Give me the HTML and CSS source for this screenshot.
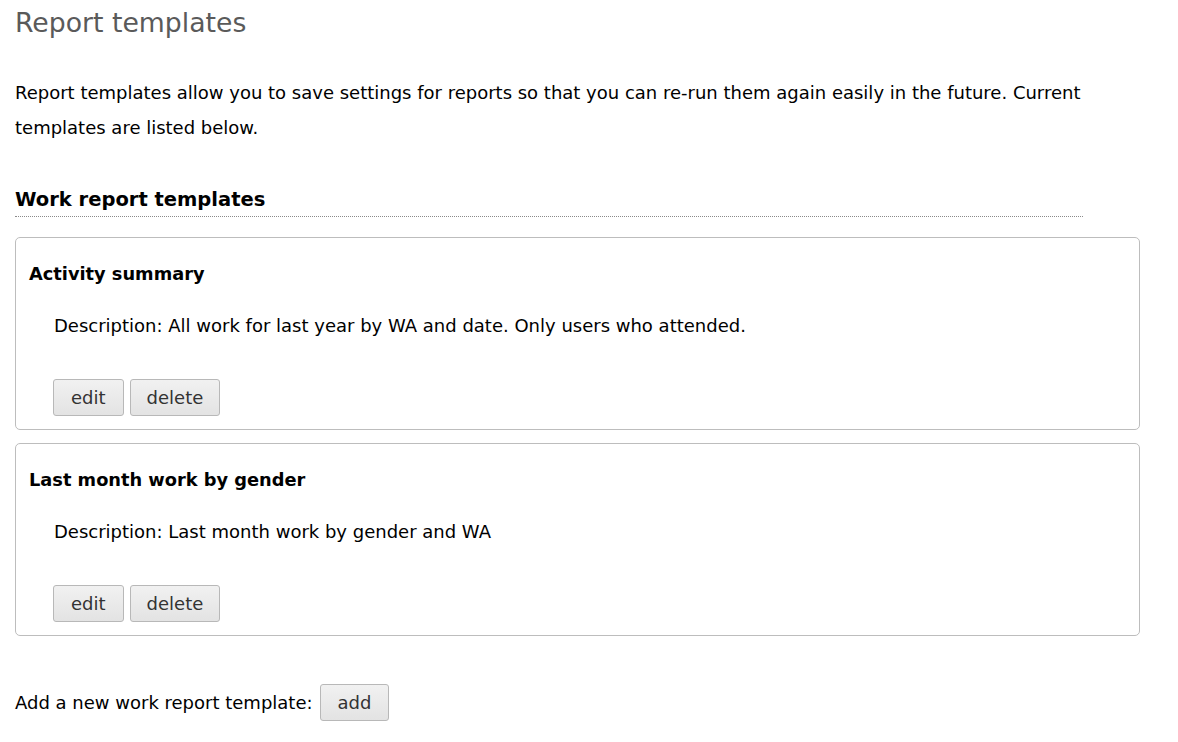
FILE: index.html
```html
<!DOCTYPE html>
<html>
<head>
<meta charset="utf-8">
<link rel="stylesheet" href="styles.css">
</head>
<body>
<div class="page">
  <h1 class="title">Report templates</h1>
  <p class="intro">Report templates allow you to save settings for reports so that you can re-run them again easily in the future. Current templates are listed below.</p>
  <h2 class="section">Work report templates</h2>
  <div class="card">
    <h3 class="card-title">Activity summary</h3>
    <p class="desc">Description: All work for last year by WA and date. Only users who attended.</p>
    <div class="actions"><button class="btn btn-edit">edit</button><button class="btn btn-delete">delete</button></div>
  </div>
  <div class="card">
    <h3 class="card-title">Last month work by gender</h3>
    <p class="desc">Description: Last month work by gender and WA</p>
    <div class="actions"><button class="btn btn-edit">edit</button><button class="btn btn-delete">delete</button></div>
  </div>
  <p class="add-row">Add a new work report template: <button class="btn btn-add">add</button></p>
</div>
</body>
</html>
```
FILE: styles.css
```css
html, body { margin: 0; padding: 0; background: #fff; }
body { font-family: "DejaVu Sans", Verdana, sans-serif; font-size: 18px; color: #000; }
.page { padding: 0 38px 0 15px; }
.title { margin: 0; padding-top: 8px; font-size: 26.7px; font-weight: normal; color: #5a5a5a; line-height: 30px; }
.intro { margin: 37px 0 0; line-height: 35px; width: 1072px; }
.section { margin: 43px 0 0; width: 1068px; font-size: 19.5px; font-weight: bold; line-height: 24px; padding-bottom: 4px; border-bottom: 1px dotted #8a8a8a; }
.card { margin-top: 20px; border: 1px solid #bdbdbd; border-radius: 5px; padding: 24px 13px 13px; }
.card + .card { margin-top: 13px; }
.card-title { margin: 0; font-size: 17.8px; font-weight: bold; line-height: 24px; }
.desc { margin: 29px 0 0 25px; line-height: 22px; }
.actions { margin: 42px 0 0 24px; display: flex; gap: 6px; }
.btn { font-family: "DejaVu Sans", Verdana, sans-serif; font-size: 18px; color: #333; background: linear-gradient(#f1f1f1, #e3e3e3); border: 1px solid #b8b8b8; border-radius: 3px; height: 37px; padding: 0 16px; cursor: pointer; }
.btn-edit { padding: 0 17px; }
.add-row { margin: 48px 0 0; display: flex; align-items: center; gap: 7px; }
.btn-add { padding: 0 17px; }
```
